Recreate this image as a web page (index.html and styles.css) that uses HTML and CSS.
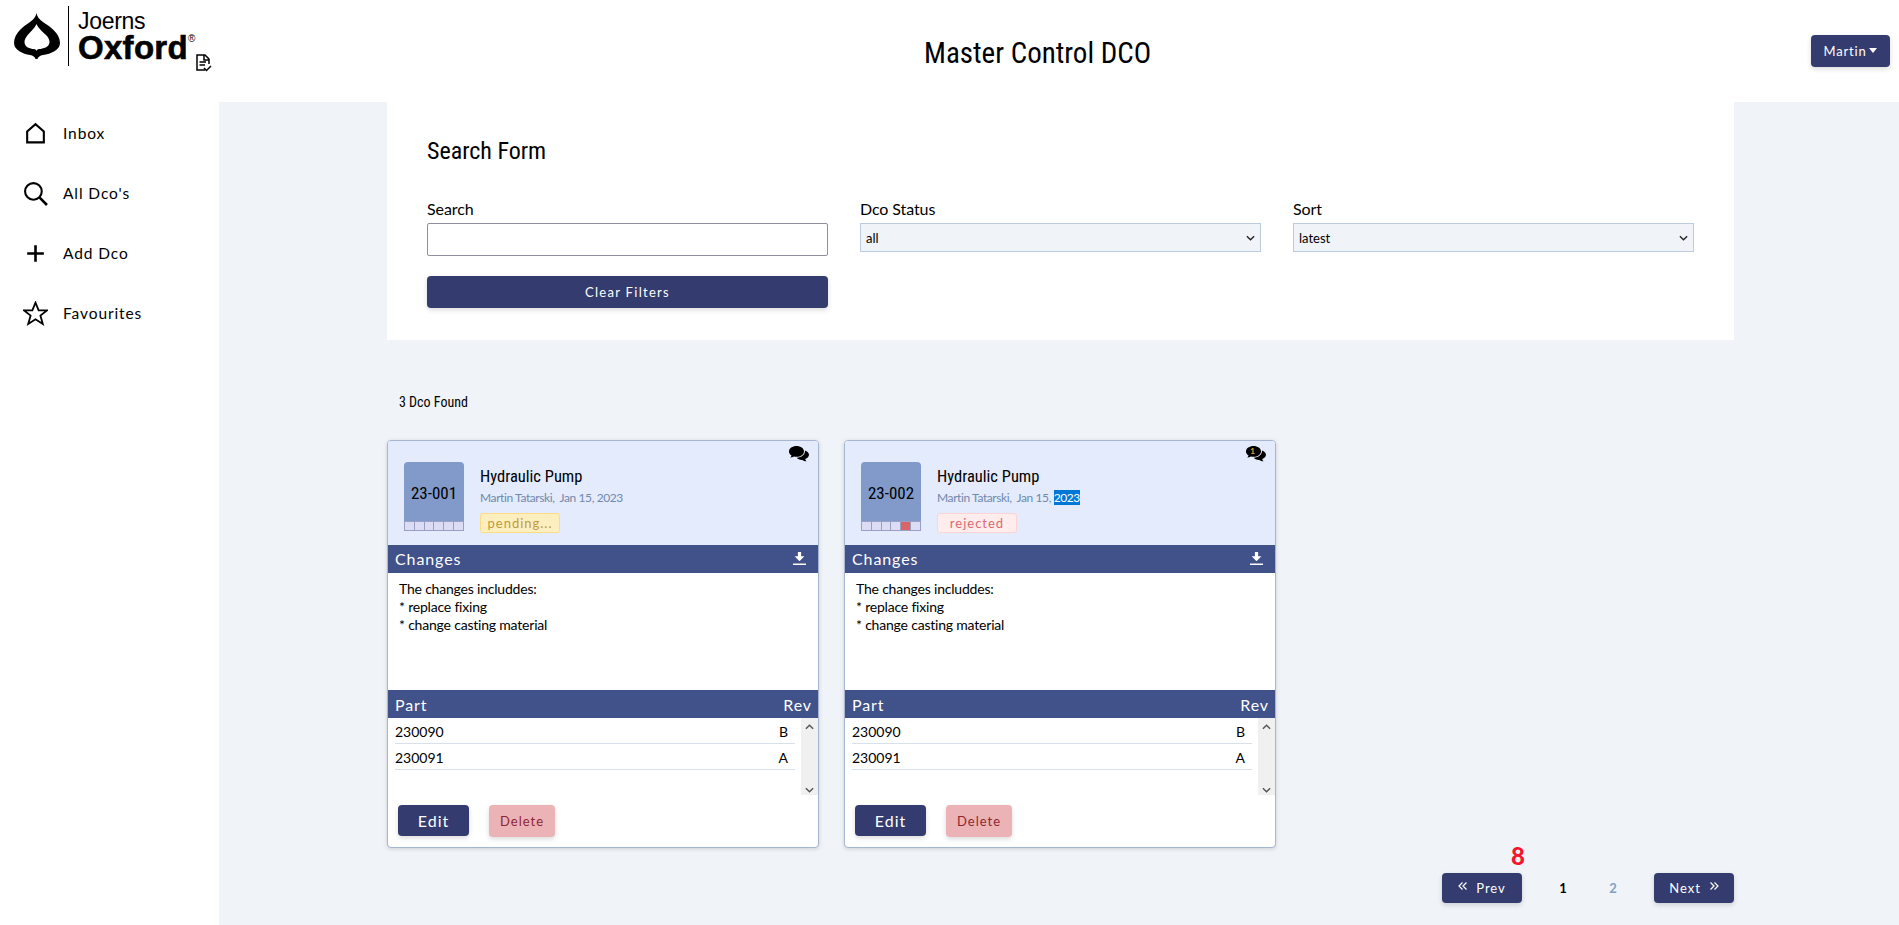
FILE: index.html
```html
<!DOCTYPE html>
<html lang="en">
<head>
    <meta charset="UTF-8">
    <title>Master Control DCO</title>
    <link rel="stylesheet" href="styles.css">
</head>
<body>
    <header class="topbar">
        <div class="logo">
            <svg class="logo-mark" viewBox="0 0 46 46">
                <path fill-rule="evenodd" d="M22.500 0C23 4 26 7 29 9C35 13 46 20 46 30C46 37 37 41 29 42C26 42.500 24 44 23.500 46H21.500C21 44 19 42.500 16 42C9 41 0 37 0 30C0 20 10 13 16 9C19 7 22 4 22.500 0ZM22.500 11C21 15 15 20 13 23C11.500 25 10.500 27 10.500 29C10.500 34 16 36 20 36C21 36.200 22 36.500 22.500 38C23 36.500 24 36.200 25 36C29 36 35.500 34 35.500 29C35.500 27 34.500 25 33 23C30 20 24 15 22.500 11Z"/>
            </svg>
            <div class="logo-text">
                <span class="logo-small">Joerns</span>
                <span class="logo-big">Oxford<sup>®</sup></span>
            </div>
            <svg class="logo-doc" viewBox="0 0 18 19" fill="none" stroke="#000" stroke-width="1.5">
                <path d="M10 17H2V2H10L14 6V11"/>
                <path d="M9 2V7H14M4.500 9H11M4.500 12H10M9 15L11.500 17.500L16 13"/>
            </svg>
        </div>
        <h1 class="page-title">Master Control DCO</h1>
        <button class="btn user-btn">Martin<span class="caret"></span></button>
    </header>

    <div class="layout">
        <nav class="sidebar">
            <a class="nav-item">
                <svg viewBox="0 0 24 24" fill="none" stroke="#000" stroke-width="2"><path d="M4 20.500V10L12 3L20 10V20.500Z"/></svg>
                Inbox
            </a>
            <a class="nav-item">
                <svg viewBox="0 0 24 24" fill="none" stroke="#000" stroke-width="2"><circle cx="10" cy="10" r="8"/><path d="M16 16L23 23" stroke-width="2.500"/></svg>
                All Dco's
            </a>
            <a class="nav-item">
                <svg viewBox="0 0 24 24" fill="none" stroke="#000" stroke-width="2.500"><path d="M12 4V20M4 12H20"/></svg>
                Add Dco
            </a>
            <a class="nav-item">
                <svg viewBox="0 0 24 24" fill="none" stroke="#000" stroke-width="1.700"><path d="M12 1.500L15 9H23L16.700 14L19 22L12 17.500L5 22L7.300 14L1 9H9Z"/></svg>
                Favourites
            </a>
        </nav>

        <main class="content">
            <section class="search-form">
                <h2 class="form-title">Search Form</h2>
                <div class="form-grid">
                    <div class="field">
                        <label>Search</label>
                        <input type="text" class="search-input">
                    </div>
                    <div class="field">
                        <label>Dco Status</label>
                        <select><option>all</option></select>
                    </div>
                    <div class="field">
                        <label>Sort</label>
                        <select><option>latest</option></select>
                    </div>
                    <button class="btn clear-btn">Clear Filters</button>
                </div>
            </section>

            <p class="found">3 Dco Found</p>

            <div class="cards">
                <article class="card">
                    <div class="card-head">
                        <div class="thumb">
                            <span class="thumb-num">23-001</span>
                            <div class="steps"><i></i><i></i><i></i><i></i><i></i><i></i></div>
                        </div>
                        <div class="card-info">
                            <h3>Hydraulic Pump</h3>
                            <p class="meta">Martin Tatarski,&nbsp; Jan 15, 2023</p>
                            <span class="badge pending">pending...</span>
                        </div>
                        <svg class="chat" viewBox="0 0 20 16"><path d="M7.500 0C3.400 0 0 2.400 0 5.400C0 7 1 8.400 2.500 9.400C2.300 10.200 1.800 11 1 11.600C2.500 11.500 3.900 11 5 10.400C5.800 10.600 6.600 10.700 7.500 10.700C11.600 10.700 15 8.300 15 5.400C15 2.400 11.600 0 7.500 0Z"/><path d="M16 4.500C16.300 8.500 12.500 11.500 7.800 11.800C9 13.300 11 14.100 13.300 13.900C14.400 14.600 15.800 15.200 17.500 15.200C16.900 14.600 16.300 13.800 16.200 13C18.500 12 20 10.600 20 8.800C20 6.900 18.300 5.200 16 4.500Z"/></svg>
                    </div>
                    <div class="bar changes-bar">Changes
                        <svg class="dl" viewBox="0 0 12 12" fill="#fff"><path d="M4.500 0H7.500V4H10.500L6 8.500L1.500 4H4.500ZM0 10.500H12V12H0Z"/></svg>
                    </div>
                    <div class="changes">The changes includdes:<br>* replace fixing<br>* change casting material</div>
                    <div class="bar">Part <span>Rev</span></div>
                    <div class="parts">
                        <div class="part-rows">
                            <div class="part-row">230090 <span>B</span></div>
                            <div class="part-row">230091 <span>A</span></div>
                        </div>
                        <div class="scrollbar">
                            <svg viewBox="0 0 10 6" fill="none" stroke="#555" stroke-width="1.600"><path d="M1 5L5 1L9 5"/></svg>
                            <svg viewBox="0 0 10 6" fill="none" stroke="#555" stroke-width="1.600"><path d="M1 1L5 5L9 1"/></svg>
                        </div>
                    </div>
                    <div class="card-actions">
                        <button class="btn edit-btn">Edit</button>
                        <button class="btn delete-btn">Delete</button>
                    </div>
                </article>

                <article class="card">
                    <div class="card-head">
                        <div class="thumb">
                            <span class="thumb-num">23-002</span>
                            <div class="steps"><i></i><i></i><i></i><i></i><i class="failed"></i><i></i></div>
                        </div>
                        <div class="card-info">
                            <h3>Hydraulic Pump</h3>
                            <p class="meta">Martin Tatarski,&nbsp; Jan 15, <span class="selected">2023</span></p>
                            <span class="badge rejected">rejected</span>
                        </div>
                        <svg class="chat" viewBox="0 0 20 16"><path d="M7.500 0C3.400 0 0 2.400 0 5.400C0 7 1 8.400 2.500 9.400C2.300 10.200 1.800 11 1 11.600C2.500 11.500 3.900 11 5 10.400C5.800 10.600 6.600 10.700 7.500 10.700C11.600 10.700 15 8.300 15 5.400C15 2.400 11.600 0 7.500 0Z"/><path d="M16 4.500C16.300 8.500 12.500 11.500 7.800 11.800C9 13.300 11 14.100 13.300 13.900C14.400 14.600 15.800 15.200 17.500 15.200C16.900 14.600 16.300 13.800 16.200 13C18.500 12 20 10.600 20 8.800C20 6.900 18.300 5.200 16 4.500Z"/></svg>
                        <span class="chat-count">1</span>
                    </div>
                    <div class="bar changes-bar">Changes
                        <svg class="dl" viewBox="0 0 12 12" fill="#fff"><path d="M4.500 0H7.500V4H10.500L6 8.500L1.500 4H4.500ZM0 10.500H12V12H0Z"/></svg>
                    </div>
                    <div class="changes">The changes includdes:<br>* replace fixing<br>* change casting material</div>
                    <div class="bar">Part <span>Rev</span></div>
                    <div class="parts">
                        <div class="part-rows">
                            <div class="part-row">230090 <span>B</span></div>
                            <div class="part-row">230091 <span>A</span></div>
                        </div>
                        <div class="scrollbar">
                            <svg viewBox="0 0 10 6" fill="none" stroke="#555" stroke-width="1.600"><path d="M1 5L5 1L9 5"/></svg>
                            <svg viewBox="0 0 10 6" fill="none" stroke="#555" stroke-width="1.600"><path d="M1 1L5 5L9 1"/></svg>
                        </div>
                    </div>
                    <div class="card-actions">
                        <button class="btn edit-btn">Edit</button>
                        <button class="btn delete-btn">Delete</button>
                    </div>
                </article>
            </div>

            <div class="pagination">
                <span class="page-count">8</span>
                <button class="btn page-btn">
                    <svg viewBox="0 0 9 9" fill="none" stroke="#fff" stroke-width="1.200"><path d="M4.500 0.500L1 4L4.500 7.500M8.500 0.500L5 4L8.500 7.500"/></svg>
                    Prev
                </button>
                <div class="page-nums">
                    <span class="page-num current">1</span>
                    <span class="page-num">2</span>
                </div>
                <button class="btn page-btn">
                    Next
                    <svg viewBox="0 0 9 9" fill="none" stroke="#fff" stroke-width="1.200"><path d="M0.500 0.500L4 4L0.500 7.500M4.500 0.500L8 4L4.500 7.500"/></svg>
                </button>
            </div>
        </main>
    </div>
</body>
</html>
```

FILE: styles.css
```css
* {
    box-sizing: border-box;
}

body {
    margin: 0;
    height: 925px;
    overflow: hidden;
    background-color: #fff;
    font-family: 'Lato', sans-serif;
    color: #000;
}

h1, h2, h3, p {
    margin: 0;
    font-weight: 400;
}

.btn {
    border: none;
    border-radius: 4px;
    background-color: #333b6f;
    color: #fff;
    font-family: 'Lato', sans-serif;
    box-shadow: 0 2px 5px rgba(0, 0, 0, 0.15);
    letter-spacing: 1px;
}

/* Top bar */
.topbar {
    height: 102px;
    display: flex;
    align-items: center;
    justify-content: space-between;
    padding: 0 9px 0 14px;
    position: relative;
}

.logo {
    display: flex;
    align-items: flex-start;
    align-self: flex-start;
    height: 72px;
    width: 198px;
    padding-top: 6px;
}

.logo-mark {
    width: 46px;
    height: 46px;
    margin: 7px 8px 0 0;
    flex: none;
}

.logo-text {
    border-left: 1px solid #000;
    height: 60px;
    padding-left: 9px;
    display: flex;
    flex-direction: column;
    font-family: 'Liberation Sans', sans-serif;
}

.logo-small {
    font-size: 23px;
    line-height: 24px;
    margin-top: 3px;
    letter-spacing: -0.3px;
}

.logo-big {
    font-size: 33px;
    line-height: 30px;
    font-weight: 700;
    letter-spacing: 0.3px;
    white-space: nowrap;
    -webkit-text-stroke: 0.6px #000;
}

.logo-big sup {
    font-size: 10px;
    font-weight: 400;
    vertical-align: 17px;
    line-height: 0;
    letter-spacing: 0;
    -webkit-text-stroke: 0;
}

.logo-doc {
    width: 18px;
    height: 19px;
    margin: 47px 0 0 0;
    flex: none;
}

.page-title {
    font-family: 'Roboto', sans-serif;
    font-stretch: 75%;
    font-size: 29px;
    position: absolute;
    left: 924px;
    top: 36px;
    line-height: 34px;
}

.user-btn {
    height: 32px;
    width: 79px;
    font-size: 13px;
    margin-top: -1px;
    letter-spacing: 0.8px;
    padding: 0;
}

.caret {
    display: inline-block;
    margin-left: 3px;
    vertical-align: 3px;
    border-top: 5px solid #fff;
    border-left: 4px solid transparent;
    border-right: 4px solid transparent;
}

/* Layout */
.layout {
    display: flex;
    height: 823px;
}

.sidebar {
    width: 219px;
    flex: none;
    padding-top: 1px;
}

.nav-item {
    height: 60px;
    display: flex;
    align-items: center;
    gap: 15px;
    padding-left: 23px;
    font-size: 15.500px;
    letter-spacing: 0.9px;
}

.nav-item svg {
    width: 25px;
    height: 25px;
}

.content {
    flex: 1;
    background-color: #f0f3f8;
    padding: 0 165px 0 168px;
}

/* Search form */
.search-form {
    background-color: #fff;
    height: 238px;
    padding: 35px 40px 0;
}

.form-title {
    font-family: 'Roboto', sans-serif;
    font-stretch: 75%;
    font-size: 24px;
    line-height: 28px;
}

.form-grid {
    display: grid;
    grid-template-columns: repeat(3, 1fr);
    column-gap: 32px;
    margin-top: 34px;
    align-items: start;
}

.field label {
    display: block;
    font-size: 16px;
    line-height: 20px;
    margin-bottom: 4px;
    letter-spacing: -0.1px;
}

.search-input {
    display: block;
    width: 100%;
    height: 33px;
    border: 1px solid #8f8f9d;
    border-radius: 2px;
    background-color: #fff;
}

.field select {
    display: block;
    width: 100%;
    height: 29px;
    border: 1px solid #bccbdf;
    border-radius: 0;
    appearance: none;
    background: #f0f3f8 url("data:image/svg+xml,%3Csvg xmlns='http://www.w3.org/2000/svg' viewBox='0 0 10 6'%3E%3Cpath d='M1 1L5 5L9 1' fill='none' stroke='%23222' stroke-width='1.500'/%3E%3C/svg%3E") no-repeat right 5px center / 9px 6px;
    font-family: 'Lato', sans-serif;
    font-size: 13px;
    padding-left: 5px;
    color: #000;
}

.clear-btn {
    grid-column: 1;
    height: 32px;
    font-size: 13px;
    margin-top: 20px;
    letter-spacing: 1.300px;
}

.found {
    font-family: 'Roboto', sans-serif;
    font-stretch: 75%;
    font-size: 14px;
    line-height: 18px;
    margin: 53px 0 29px 12px;
}

/* Cards */
.cards {
    display: flex;
    gap: 25px;
}

.card {
    width: 432px;
    height: 408px;
    background-color: #fff;
    border: 1px solid #a6b5d0;
    border-radius: 4px;
    box-shadow: 0 1px 4px rgba(0, 0, 0, 0.15);
    overflow: hidden;
}

.card-head {
    height: 104px;
    background-color: #e4ebfd;
    display: flex;
    padding: 21px 0 0 16px;
    gap: 16px;
    position: relative;
}

.thumb {
    width: 60px;
    height: 69px;
    background-color: #819ac9;
    border-radius: 4px 4px 0 0;
    display: flex;
    flex-direction: column;
    justify-content: space-between;
    align-items: center;
    overflow: hidden;
}

.thumb-num {
    font-family: 'Roboto', sans-serif;
    font-stretch: 75%;
    font-size: 17px;
    line-height: 20px;
    margin-top: 21px;
}

.steps {
    display: flex;
    width: 100%;
    height: 10px;
}

.steps i {
    flex: 1;
    background-color: #dcdcf5;
    border: 1px solid #9a9fc4;
    margin-left: -1px;
}

.steps i:first-child {
    margin-left: 0;
}

.steps .failed {
    background-color: #d96565;
}

.card-info h3 {
    font-family: 'Roboto', sans-serif;
    font-stretch: 75%;
    font-weight: 400;
    font-size: 16.500px;
    line-height: 20px;
    margin: 5px 0 3px;
}

.meta {
    font-size: 12px;
    line-height: 16px;
    letter-spacing: -0.4px;
    color: #7189ab;
}

.selected {
    background-color: #0078d7;
    color: #fff;
}

.badge {
    display: inline-block;
    width: 80px;
    height: 20px;
    margin-top: 7px;
    border-radius: 3px;
    font-size: 13px;
    line-height: 18px;
    letter-spacing: 1px;
    text-align: center;
}

.pending {
    background-color: #fdeebf;
    border: 1px solid #fcdc85;
    color: #c09b3c;
}

.rejected {
    background-color: #ffecec;
    border: 1px solid #fdd4d4;
    color: #dc6a72;
}

.chat {
    position: absolute;
    top: 5px;
    right: 9px;
    width: 20px;
    height: 16px;
}

.chat-count {
    position: absolute;
    top: 6px;
    right: 20px;
    font-size: 8px;
    font-weight: 700;
    line-height: 9px;
    color: #e8a33d;
}

.bar {
    height: 28px;
    background-color: #415189;
    color: #fff;
    display: flex;
    align-items: center;
    justify-content: space-between;
    padding: 0 6px 0 7px;
    font-size: 16px;
    letter-spacing: 0.9px;
}

.changes-bar {
    padding-bottom: 2px;
}

.dl {
    width: 13px;
    height: 13px;
    margin-right: 6px;
}

.changes {
    height: 117px;
    padding: 7px 11px;
    font-size: 14px;
    line-height: 18px;
    letter-spacing: -0.2px;
}

.parts {
    height: 77px;
    display: flex;
}

.part-rows {
    flex: 1;
    padding: 0 6px 0 7px;
}

.part-row {
    height: 26px;
    display: flex;
    align-items: center;
    justify-content: space-between;
    border-bottom: 1px solid #d8e0ec;
    font-size: 14px;
    padding: 1px 7px 0 0;
}

.scrollbar {
    width: 17px;
    background-color: #f0f0f0;
    display: flex;
    flex-direction: column;
    justify-content: space-between;
    align-items: center;
    padding: 6px 0 2px;
}

.scrollbar svg {
    width: 9px;
    height: 6px;
}

.card-actions {
    display: flex;
    align-items: flex-start;
    gap: 20px;
    padding: 10px 0 0 10px;
}

.edit-btn {
    width: 71px;
    height: 31px;
    font-size: 16px;
}

.delete-btn {
    width: 66px;
    height: 32px;
    font-size: 13px;
    background-color: #ecb3b7;
    color: #8e2530;
}

/* Pagination */
.pagination {
    display: flex;
    justify-content: flex-end;
    align-items: center;
    margin-top: 25px;
    position: relative;
}

.page-btn {
    width: 80px;
    height: 30px;
    font-size: 13px;
    display: flex;
    align-items: center;
    justify-content: center;
    gap: 9px;
    padding: 0;
}

.page-btn svg {
    width: 9px;
    height: 9px;
    margin-top: -3px;
}

.page-nums {
    display: flex;
    padding: 0 16px;
}

.page-num {
    width: 50px;
    text-align: center;
    font-size: 13px;
    font-weight: 700;
    color: #7da2c4;
}

.page-num.current {
    color: #000;
}

.page-count {
    position: absolute;
    right: 209px;
    top: -29px;
    font-size: 24px;
    font-weight: 900;
    line-height: 24px;
    color: #f5142c;
}
```
